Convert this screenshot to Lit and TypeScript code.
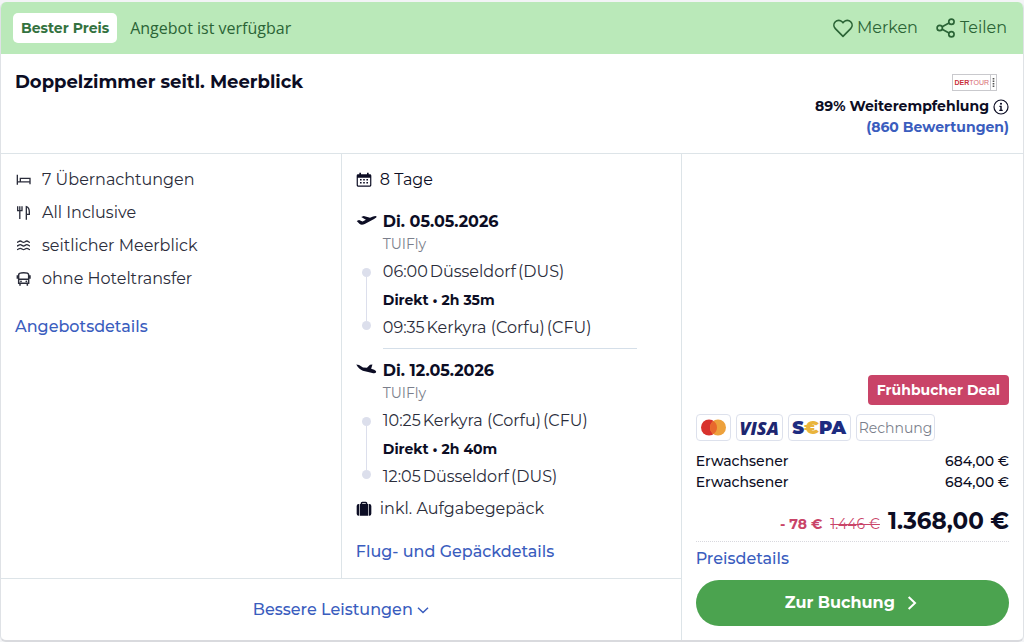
import { LitElement, html, css, svg, nothing } from "lit";
import { customElement, property } from "lit/decorators.js";

const icons: Record<string, unknown> = {
  heart: svg`<path d="M12 22 2.800 12.700a5.800 5.800 0 0 1 0-8.200 5.700 5.700 0 0 1 8.100 0L12 5.700l1.100-1.200a5.700 5.700 0 0 1 8.100 0 5.800 5.800 0 0 1 0 8.200z" fill="none" stroke="currentColor" stroke-width="2" stroke-linejoin="round"/>`,
  share: svg`<g fill="none" stroke="currentColor" stroke-width="2"><circle cx="18.500" cy="4.500" r="3.200"/><circle cx="18.500" cy="19.500" r="3.200"/><circle cx="4.500" cy="12" r="3.200"/><path d="M7.400 10.500 15.600 6M7.400 13.500l8.200 4.500"/></g>`,
  info: svg`<circle cx="12" cy="12" r="10.500" fill="none" stroke="currentColor" stroke-width="1.800"/><circle cx="12" cy="7.200" r="1.600"/><path d="M9.600 10.200h3.500v6h1.500v1.700H9.400v-1.700h1.500v-4.300H9.600z"/>`,
  bed: svg`<path d="M3.500 4v15M3.500 14.800h19M22.500 18.500V9.500H8v5" fill="none" stroke="currentColor" stroke-width="2"/>`,
  meal: svg`<path d="M4 2v6.500h6.500V2M7.200 2v19M17 22V2.500c3 1 4.500 4.500 4.500 8V14H17" fill="none" stroke="currentColor" stroke-width="2"/>`,
  waves: svg`<path d="M3 6.500c2 0 2.500-2 4.800-2s3 2 5 2 2.700-2 5-2 2.500 2 4.700 2M3 12c2 0 2.500-2 4.800-2s3 2 5 2 2.700-2 5-2 2.500 2 4.700 2M3 17.500c2 0 2.500-2 4.800-2s3 2 5 2 2.700-2 5-2 2.500 2 4.700 2" fill="none" stroke="currentColor" stroke-width="2"/>`,
  bus: svg`<path d="M5.500 18.500V5.500c0-2 2.500-3 7.500-3s7.500 1 7.500 3v13zM5.500 12.500h15M5.500 7.500h-2v4M20.500 7.500h2v4M7.500 19v3M18.500 19v3" fill="none" stroke="currentColor" stroke-width="2.200"/><circle cx="9" cy="15.700" r="1.300"/><circle cx="17" cy="15.700" r="1.300"/>`,
  calendar: svg`<path d="M5 1h2.500v2.500h9V1H19v2.500h2a2 2 0 0 1 2 2V20a2 2 0 0 1-2 2H3a2 2 0 0 1-2-2V5.500a2 2 0 0 1 2-2h2zM2.800 8.500v11c0 .5.300.8.800.8h16.800c.5 0 .8-.3.800-.8v-11z" fill-rule="evenodd"/><path d="M6 10.500h2.400v2.300H6zm4.800 0h2.400v2.300h-2.400zm4.800 0H18v2.300h-2.400zM6 15h2.400v2.300H6zm4.800 0h2.400v2.300h-2.400zm4.800 0H18v2.300h-2.400z"/>`,
  suitcase: svg`<path d="M7 4.500V3.500A2.500 2.500 0 0 1 9.500 1h5A2.500 2.500 0 0 1 17 3.500v1h1.200V22H5.800V4.500zm2.300 0h5.400V3.300H9.300zM4.800 4.500V22H4a3 3 0 0 1-3-3V7.500a3 3 0 0 1 3-3zM19.200 4.500V22h.8a3 3 0 0 0 3-3V7.500a3 3 0 0 0-3-3z" fill-rule="evenodd"/>`,
  takeoff: svg`<path d="M.8 12.500 3.500 11.500 7.500 13 11.300 11.200 6 8 8.800 6.800 16 8.900 19.500 7.400C21.500 6.600 23.200 6.500 23.500 7.500c.2 1-1.200 2-2.800 2.700L10 15.900c-2 1-4.200 1.200-5.800.2z"/>`,
  landing: svg`<path d="M.3 6.300 3.500 6.900 8 9.700 12.500 9.900 16 6.500 18.800 6.300 17.300 11 20.800 12.400c1.900.9 2.700 2.200 2 3.100-.8.900-2.600.9-4.200.4L7.800 13.300C5 12.400 2.300 9.900.3 6.300z"/>`,
  down: svg`<path d="m2 7.500 10 9.500 10-9.500" fill="none" stroke="currentColor" stroke-width="3"/>`,
  right: svg`<path d="m7 3 9.500 9L7 21" fill="none" stroke="currentColor" stroke-width="3"/>`,
};

@customElement("ui-icon")
class UiIcon extends LitElement {
  @property() name = "";
  static styles = css`
    :host { display: inline-flex; flex: none; width: 16px; height: 16px; }
    svg { width: 100%; height: 100%; fill: currentColor; }
  `;
  render() {
    return html`<svg viewBox="0 0 24 24" aria-hidden="true">${icons[this.name] ?? nothing}</svg>`;
  }
}

interface Stop {
  time: string;
  city: string;
  code: string;
}

interface Flight {
  icon: string;
  date: string;
  airline: string;
  from: Stop;
  duration: string;
  to: Stop;
}

const flights: Flight[] = [
  {
    icon: "takeoff",
    date: "Di. 05.05.2026",
    airline: "TUIFly",
    from: { time: "06:00", city: "Düsseldorf", code: "(DUS)" },
    duration: "Direkt • 2h 35m",
    to: { time: "09:35", city: "Kerkyra (Corfu)", code: "(CFU)" },
  },
  {
    icon: "landing",
    date: "Di. 12.05.2026",
    airline: "TUIFly",
    from: { time: "10:25", city: "Kerkyra (Corfu)", code: "(CFU)" },
    duration: "Direkt • 2h 40m",
    to: { time: "12:05", city: "Düsseldorf", code: "(DUS)" },
  },
];

const features = [
  { icon: "bed", label: "7 Übernachtungen" },
  { icon: "meal", label: "All Inclusive" },
  { icon: "waves", label: "seitlicher Meerblick" },
  { icon: "bus", label: "ohne Hoteltransfer" },
];

@customElement("app-root")
class AppRoot extends LitElement {
  static styles = css`
    :host {
      display: block;
      padding: 2px 0 0;
      background: #f3f4f6;
      color: #2b2d3b;
      font: 16px/24px Montserrat, Inter, "Liberation Sans", sans-serif;
    }
    * { box-sizing: border-box; }
    h2, h3, p, ul { margin: 0; padding: 0; }
    ul { list-style: none; }
    a { color: #3a5dbe; text-decoration: none; font-weight: 500; }
    button { font: inherit; color: inherit; border: 0; background: none; padding: 0; cursor: pointer; }
    .card {
      background: #fff;
      border: 1px solid #dfe2e6;
      border-top: 0;
      border-bottom: 2px solid #d9dade;
      border-radius: 6px;
      overflow: hidden;
    }
    .banner {
      display: flex;
      align-items: center;
      gap: 13px;
      height: 52px;
      padding: 0 16px 0 12px;
      background: #bae9b9;
      color: #2b6436;
    }
    .best {
      padding: 3px 8px;
      border-radius: 5px;
      background: #fff;
      color: #347240;
      font-size: 14px;
      font-weight: 700;
    }
    .available { flex: 1; font-family: "Open Sans", "Noto Sans", sans-serif; }
    .action { display: flex; align-items: center; gap: 4px; }
    .action + .action { margin-left: 5px; }
    .action ui-icon { width: 20px; height: 20px; }
    .head {
      display: flex;
      justify-content: space-between;
      min-height: 100px;
      padding: 14px;
      border-bottom: 1px solid #dde4e8;
      color: #0c0d24;
    }
    .title { font-size: 18px; line-height: 28px; font-weight: 700; }
    .rating { display: flex; flex-direction: column; align-items: flex-end; font-size: 14px; line-height: 21px; font-weight: 700; }
    .rating a { font-weight: 700; }
    .score { display: flex; align-items: center; gap: 4px; }
    .operator {
      display: flex;
      align-items: center;
      height: 17px;
      margin: 6px 12px 5px 0;
      padding-left: 2px;
      border: 1px solid #c9c9cd;
      font: 400 7px/15px "Liberation Sans", sans-serif;
      color: #d86a70;
    }
    .operator b { color: #c9303c; }
    .stamp { width: 6px; height: 15px; margin-left: 1px; border-left: 1px solid #c9c9cd; color: #555; }
    .body { display: grid; grid-template-columns: 665fr 335fr; }
    .trip { display: grid; grid-template-columns: 1fr 1fr; grid-template-rows: 1fr auto; }
    .hotel { padding: 9px 14px 14px; }
    .travel { padding: 9px 14px 14px; border-left: 1px solid #dde4e8; }
    .row { display: flex; align-items: center; gap: 11px; height: 33px; }
    .hotel .link { margin-top: 20px; }
    .travel .row { gap: 8px; color: #0c0d24; }
    .link { display: block; width: fit-content; }
    .flight {
      display: grid;
      grid-template-columns: 18px 1fr;
      column-gap: 9px;
      margin-right: 30px;
    }
    .row + .flight { margin-top: 14px; }
    .flight + .flight { margin-top: 10px; }
    .flight > ui-icon { width: 21px; height: 21px; color: #0c0d24; }
    .date { font-size: 16px; line-height: 24px; font-weight: 700; color: #0c0d24; }
    .airline { grid-column: 2; font-size: 14px; line-height: 20px; color: #7b7f8c; }
    .rail {
      display: flex;
      flex-direction: column;
      align-items: center;
      margin: 14px 0 12px 4px;
    }
    .rail::before, .rail::after { content: ""; width: 9px; height: 9px; border-radius: 50%; background: #dcdfec; }
    .line { flex: 1; width: 1px; background: #dcdfec; }
    .stops { margin-top: 4px; line-height: 28px; }
    .stop { display: flex; gap: 2px; }
    .duration { font-size: 14px; font-weight: 700; color: #0c0d24; }
    .rule { grid-column: 2; height: 1px; margin-top: 6px; background: #d5dfe9; }
    .bag { margin: 1px 0 15px; }
    .travel .bag { color: #2b2d3b; }
    .bag ui-icon { color: #0c0d24; }
    .more {
      grid-column: 1 / -1;
      display: flex;
      align-items: center;
      justify-content: center;
      gap: 4px;
      height: 62px;
      border-top: 1px solid #dde4e8;
      color: #3a5dbe;
      font-weight: 500;
    }
    .more ui-icon { width: 12px; height: 12px; }
    .price {
      display: flex;
      flex-direction: column;
      justify-content: flex-end;
      padding: 14px;
      border-left: 1px solid #dde4e8;
      color: #0c0d24;
    }
    .deal {
      align-self: flex-end;
      padding: 3px 9px;
      border-radius: 4px;
      background: #c94468;
      color: #fff;
      font-size: 14px;
      font-weight: 700;
    }
    .methods { display: flex; gap: 5px; margin: 9px 0 10px; }
    .method {
      display: flex;
      align-items: center;
      justify-content: center;
      height: 27px;
      padding: 0 2px;
      border: 1px solid #dde1ec;
      border-radius: 4px;
      color: #7b7f8c;
      font-size: 14px;
    }
    .master { width: 35px; }
    .master svg { width: 27px; height: 17px; }
    .visa { width: 47px; color: #1d2670; font: italic 800 18px "Open Sans", sans-serif; }
    .sepa { width: 63px; color: #1d2c80; font-size: 18px; font-weight: 900; }
    .sepa i { color: #e9b43c; font-style: normal; }
    .person { display: flex; justify-content: space-between; font-size: 14px; line-height: 21px; font-weight: 500; }
    .total {
      display: flex;
      justify-content: flex-end;
      align-items: baseline;
      gap: 8px;
      margin-top: 12px;
      padding-bottom: 1px;
      border-bottom: 1px dotted #d8d8de;
      font-size: 14px;
      line-height: 32px;
      color: #c94468;
    }
    .total strong { font-size: 23px; color: #0c0d24; }
    .price .link { margin: 5px 0 9px; }
    .book {
      display: flex;
      align-items: center;
      justify-content: center;
      gap: 9px;
      height: 46px;
      border-radius: 23px;
      background: #4ba34f;
      color: #fff;
      font-weight: 700;
    }
  `;

  renderStop(s: Stop) {
    return html`<p class="stop"><span>${s.time}</span><span>${s.city}</span><span>${s.code}</span></p>`;
  }

  renderFlight(f: Flight, last: boolean) {
    return html`<section class="flight">
      <ui-icon name=${f.icon}></ui-icon>
      <h3 class="date">${f.date}</h3>
      <p class="airline">${f.airline}</p>
      <div class="rail"><span class="line"></span></div>
      <div class="stops">
        ${this.renderStop(f.from)}
        <p class="duration">${f.duration}</p>
        ${this.renderStop(f.to)}
      </div>
      ${last ? nothing : html`<div class="rule"></div>`}
    </section>`;
  }

  render() {
    return html`<article class="card">
      <header class="banner">
        <span class="best">Bester Preis</span>
        <span class="available">Angebot ist verfügbar</span>
        <button class="action"><ui-icon name="heart"></ui-icon>Merken</button>
        <button class="action"><ui-icon name="share"></ui-icon>Teilen</button>
      </header>
      <div class="head">
        <h2 class="title">Doppelzimmer seitl. Meerblick</h2>
        <div class="rating">
          <div class="operator"><b>DER</b>TOUR<svg class="stamp" viewBox="0 0 6 15" aria-hidden="true"><path d="M3 2v11" stroke="currentColor" stroke-width="2" stroke-dasharray="2 1"/></svg></div>
          <div class="score">89% Weiterempfehlung <ui-icon name="info"></ui-icon></div>
          <a href="#bewertungen">(860 Bewertungen)</a>
        </div>
      </div>
      <div class="body">
        <div class="trip">
          <div class="hotel">
            <ul>${features.map((f) => html`<li class="row"><ui-icon name=${f.icon}></ui-icon>${f.label}</li>`)}</ul>
            <a class="link" href="#angebot">Angebotsdetails</a>
          </div>
          <div class="travel">
            <div class="row"><ui-icon name="calendar"></ui-icon>8 Tage</div>
            ${flights.map((f, i) => this.renderFlight(f, i === flights.length - 1))}
            <div class="row bag"><ui-icon name="suitcase"></ui-icon>inkl. Aufgabegepäck</div>
            <a class="link" href="#flug">Flug- und Gepäckdetails</a>
          </div>
          <button class="more">Bessere Leistungen<ui-icon name="down"></ui-icon></button>
        </div>
        <div class="price">
          <span class="deal">Frühbucher Deal</span>
          <div class="methods">
            <span class="method master"><svg viewBox="0 0 27 17" role="img" aria-label="Mastercard"><circle cx="9" cy="8.500" r="8" fill="#d8322d"/><circle cx="18" cy="8.500" r="8" fill="#eda13c"/><path d="M13.500 1.900a8 8 0 0 1 0 13.200 8 8 0 0 1 0-13.200z" fill="#e8682d"/></svg></span>
            <span class="method visa">VISA</span>
            <span class="method sepa">S<i>€</i>PA</span>
            <span class="method">Rechnung</span>
          </div>
          <div class="person"><span>Erwachsener</span><span>684,00 €</span></div>
          <div class="person"><span>Erwachsener</span><span>684,00 €</span></div>
          <div class="total"><b>- 78 €</b><s>1.446 €</s><strong>1.368,00 €</strong></div>
          <a class="link" href="#preis">Preisdetails</a>
          <button class="book">Zur Buchung<ui-icon name="right"></ui-icon></button>
        </div>
      </div>
    </article>`;
  }
}
